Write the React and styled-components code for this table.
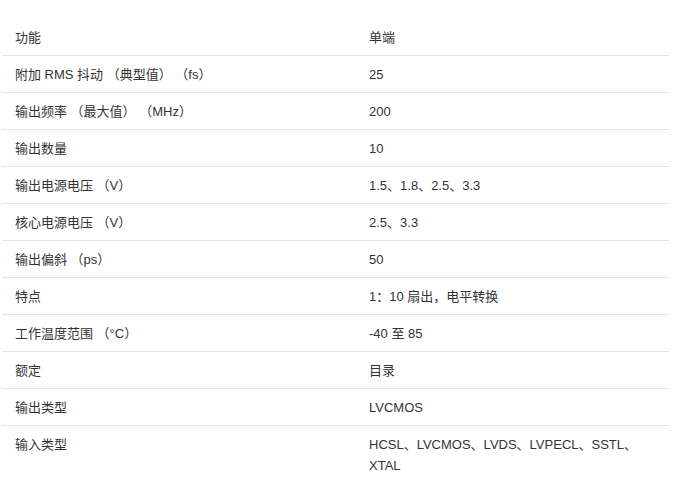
import React from "react";
import styled, { createGlobalStyle } from "styled-components";

const Global = createGlobalStyle`
  html, body { margin: 0; padding: 0; background: #fff; }
  body { font-family: "Liberation Sans", "Noto Sans CJK SC", sans-serif; color: #333; }
`;

const Wrap = styled.div`
  padding: 19px 9px 0 2px;
`;

const Table = styled.table`
  width: 667px;
  border-collapse: collapse;
  table-layout: fixed;
  font-size: 13px;
  line-height: 21px;
`;

const Row = styled.tr`
  border-bottom: ${(p) => (p.$last ? "none" : "1px solid #e4e4e4")};
`;

const Cell = styled.td`
  padding: 8px 13px 7px 13px;
  vertical-align: top;
  width: ${(p) => p.$w || "auto"};
  color: #333;
`;

const rows = [
  ["功能", "单端"],
  ["附加 RMS 抖动 （典型值） （fs）", "25"],
  ["输出频率 （最大值） （MHz）", "200"],
  ["输出数量", "10"],
  ["输出电源电压 （V）", "1.5、1.8、2.5、3.3"],
  ["核心电源电压 （V）", "2.5、3.3"],
  ["输出偏斜 （ps）", "50"],
  ["特点", "1：10 扇出，电平转换"],
  ["工作温度范围 （°C）", "-40 至 85"],
  ["额定", "目录"],
  ["输出类型", "LVCMOS"],
  ["输入类型", "HCSL、LVCMOS、LVDS、LVPECL、SSTL、XTAL"],
];

export default function App() {
  return (
    <>
      <Global />
      <Wrap>
        <Table>
          <tbody>
            {rows.map(([k, v], i) => (
              <Row key={i} $last={i === rows.length - 1}>
                <Cell $w="328px">{k}</Cell>
                <Cell>{v}</Cell>
              </Row>
            ))}
          </tbody>
        </Table>
      </Wrap>
    </>
  );
}
